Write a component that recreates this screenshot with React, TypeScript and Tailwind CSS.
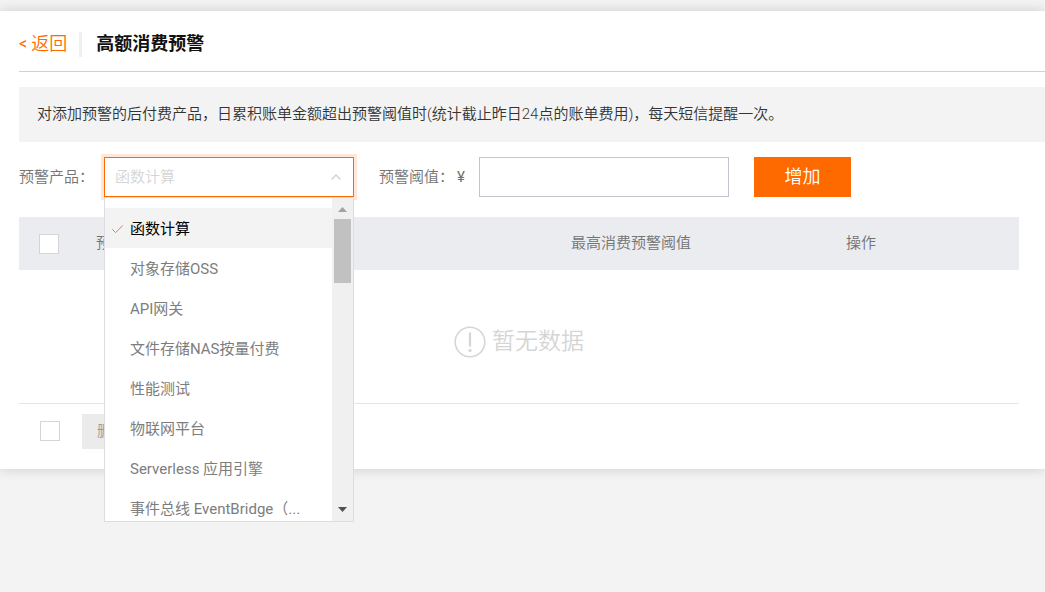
import { useState } from 'react';
import { Check, ChevronUp } from 'lucide-react';

const PRODUCTS = [
  '函数计算',
  '对象存储OSS',
  'API网关',
  '文件存储NAS按量付费',
  '性能测试',
  '物联网平台',
  'Serverless 应用引擎',
  '事件总线 EventBridge（...',
];

const checkboxClass = 'block w-5 h-5 appearance-none bg-white border border-[#d5d5d5] checked:bg-[#ff6a00]';

function ProductSelect() {
  const [product, setProduct] = useState(PRODUCTS[0]);
  const [open, setOpen] = useState(true);

  const choose = (name: string) => {
    setProduct(name);
    setOpen(false);
  };

  return (
    <div className="relative w-[250px]">
      <select
        id="product"
        value={product}
        onChange={(e) => setProduct(e.target.value)}
        onMouseDown={(e) => {
          e.preventDefault();
          setOpen(!open);
        }}
        className="block w-full h-10 pl-[10px] pr-8 appearance-none bg-white border border-[#ff6a00] text-[#d5d5d5] outline-none shadow-[0_0_0_3px_#ffe6d6]"
      >
        {PRODUCTS.map(name => (
          <option key={name} value={name}>{name}</option>
        ))}
      </select>
      <ChevronUp className="absolute right-[10px] top-3 w-4 h-4 text-[#d0d0d0] pointer-events-none" />

      {open && (
        <div className="absolute left-0 top-10 z-10 flex w-full h-[325px] bg-white border border-[#dcdce2]">
          <ul role="listbox" aria-label="预警产品" className="flex-1 min-w-0 pt-[10px] overflow-hidden">
            {PRODUCTS.map(name => (
              <li
                key={name}
                role="option"
                aria-selected={name === product}
                onClick={() => choose(name)}
                className={`flex items-center h-10 pt-[2px] pl-[5px] pr-6 cursor-pointer font-normal ${
                  name === product ? 'bg-[#f3f3f3] text-black' : 'text-[#7d7d7d]'
                }`}
              >
                <span className="flex-none w-5">
                  {name === product && <Check className="w-[15px] h-[15px] text-[#ff6a3c]" strokeWidth={1.5} />}
                </span>
                <span className="whitespace-nowrap">{name}</span>
              </li>
            ))}
          </ul>

          {/* Scrollbar */}
          <div className="flex flex-col items-center justify-between w-[21px] bg-[#f0f0f0] pt-[9px] pb-[9px]">
            <div className="flex flex-col items-center gap-[7px]">
              <svg width="9" height="5" viewBox="0 0 9 5" fill="#a3a3a3"><path d="M4.5 0L9 5H0z" /></svg>
              <div className="w-[17px] h-16 bg-[#c1c1c1]" />
            </div>
            <svg width="9" height="5" viewBox="0 0 9 5" fill="#505050"><path d="M0 0h9L4.5 5z" /></svg>
          </div>
        </div>
      )}
    </div>
  );
}

export default function App() {
  const [threshold, setThreshold] = useState('');

  return (
    <div className="min-h-screen pt-[11px] bg-[#f3f3f3] overflow-hidden font-[Roboto,'Noto_Sans_CJK_SC',sans-serif] text-[15px] font-[350] text-[#737373]">
      <main className="pl-[19px] pb-5 bg-white shadow-[0_0_12px_rgba(0,0,0,0.16)]">
        {/* Header */}
        <header className="flex items-center h-[61px] pt-[6px] border-b border-[#d0d0d0] text-lg">
          <a href="#back" className="flex items-center gap-1 text-[#ff6a00]">
            <span className="text-base font-normal">&lt;</span>
            返回
          </a>
          <span className="w-[3px] h-[25px] ml-3 mr-[14px] bg-[#efefef]" />
          <h1 className="font-bold text-[#111]">高额消费预警</h1>
        </header>

        <p className="mt-[15px] px-[18px] py-4 leading-[23px] bg-[#f3f3f3] text-[#333]">
          对添加预警的后付费产品，日累积账单金额超出预警阈值时(统计截止昨日24点的账单费用)，每天短信提醒一次。
        </p>

        <div className="pr-[26px]">
          {/* Add form */}
          <form className="flex items-center mt-[15px]" onSubmit={(e) => e.preventDefault()}>
            <label htmlFor="product" className="w-[85px]">预警产品：</label>
            <ProductSelect />
            <label htmlFor="threshold" className="flex w-[125px] pl-[25px] gap-[3px]">
              预警阈值：<span className="font-normal">¥</span>
            </label>
            <input
              id="threshold"
              type="text"
              value={threshold}
              onChange={(e) => setThreshold(e.target.value)}
              className="w-[250px] h-10 px-3 bg-white border border-[#c4c4cf] outline-none"
            />
            <button type="submit" className="w-[97px] h-10 ml-[25px] bg-[#ff6a00] text-lg text-white">增加</button>
          </form>

          {/* Alert list */}
          <table className="w-full mt-5 table-fixed text-left">
            <thead>
              <tr className="h-[53px] bg-[#ebecf0]">
                <th className="w-[77px] pl-5">
                  <input type="checkbox" aria-label="全选" className={checkboxClass} />
                </th>
                <th className="font-[350]">预警产品</th>
                <th className="w-[275px] font-[350]">最高消费预警阈值</th>
                <th className="w-[173px] font-[350]">操作</th>
              </tr>
            </thead>
            <tbody>
              <tr className="h-[133px] border-b border-[#e5e5e5]">
                <td colSpan={4}>
                  <div className="flex items-center justify-center gap-[6px] pt-3 text-[23px] text-[#d5d5d5]">
                    <svg width="32" height="32" viewBox="0 0 32 32" fill="none" stroke="currentColor" strokeWidth="1.6">
                      <circle cx="16" cy="16" r="14.8" />
                      <path d="M16 6.5v14" strokeWidth="2.2" />
                      <circle cx="16" cy="24.5" r="1.6" fill="currentColor" stroke="none" />
                    </svg>
                    暂无数据
                  </div>
                </td>
              </tr>
            </tbody>
          </table>

          <div className="flex items-center gap-[22px] pt-[10px] pl-[21px]">
            <input type="checkbox" aria-label="选择全部" className={checkboxClass} />
            <button type="button" disabled className="h-[35px] px-[15px] bg-[#ebebeb] text-[#999]">删除</button>
          </div>
        </div>
      </main>
    </div>
  );
}
